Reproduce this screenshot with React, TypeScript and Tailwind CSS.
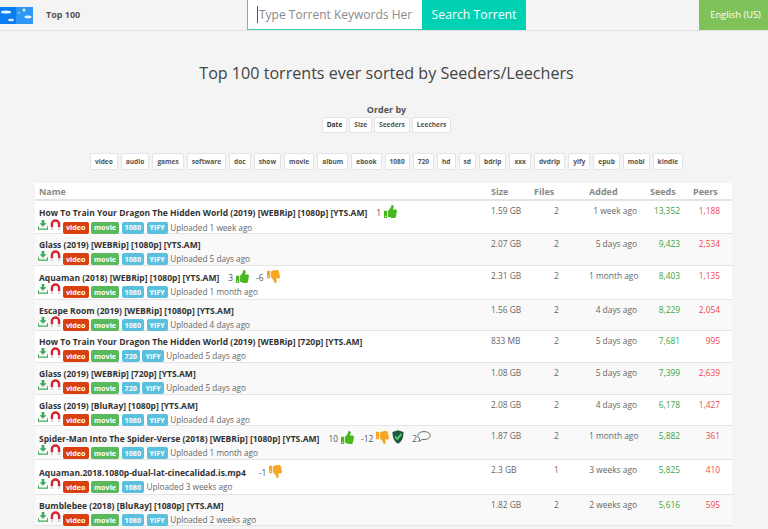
import { FaThumbsUp, FaThumbsDown } from 'react-icons/fa';

const orderOptions = ['Date', 'Size', 'Seeders', 'Leechers'];
const filters = ['video', 'audio', 'games', 'software', 'doc', 'show', 'movie', 'album', 'ebook', '1080', '720', 'hd', 'sd', 'bdrip', 'xxx', 'dvdrip', 'yify', 'epub', 'mobi', 'kindle'];

type Torrent = {
  name: string;
  tags: string[];
  uploaded: string;
  size: string;
  files: number;
  added: string;
  seeds: string;
  peers: string;
  up?: number;
  down?: number;
  safe?: boolean;
  comments?: number;
  rowClass: string;
  cellClass?: string;
};

const torrents: Torrent[] = [
  { name: 'How To Train Your Dragon The Hidden World (2019) [WEBRip] [1080p] [YTS.AM]', tags: ['1080', 'YIFY'], uploaded: '1 week ago', size: '1.59 GB', files: 2, added: '1 week ago', seeds: '13,352', peers: '1,188', up: 1, rowClass: 'h-[34px] bg-white', cellClass: 'pt-[3px]' },
  { name: 'Glass (2019) [WEBRip] [1080p] [YTS.AM]', tags: ['1080', 'YIFY'], uploaded: '5 days ago', size: '2.07 GB', files: 2, added: '5 days ago', seeds: '9,423', peers: '2,534', rowClass: 'h-[32px] bg-[#f9f9f9]' },
  { name: 'Aquaman (2018) [WEBRip] [1080p] [YTS.AM]', tags: ['1080', 'YIFY'], uploaded: '1 month ago', size: '2.31 GB', files: 2, added: '1 month ago', seeds: '8,403', peers: '1,135', up: 3, down: -6, rowClass: 'h-[34px] bg-white', cellClass: 'pt-[2px]' },
  { name: 'Escape Room (2019) [WEBRip] [1080p] [YTS.AM]', tags: ['1080', 'YIFY'], uploaded: '4 days ago', size: '1.56 GB', files: 2, added: '4 days ago', seeds: '8,229', peers: '2,054', rowClass: 'h-[31px] bg-[#f9f9f9]' },
  { name: 'How To Train Your Dragon The Hidden World (2019) [WEBRip] [720p] [YTS.AM]', tags: ['720', 'YIFY'], uploaded: '5 days ago', size: '833 MB', files: 2, added: '5 days ago', seeds: '7,681', peers: '995', rowClass: 'h-[32px] bg-white' },
  { name: 'Glass (2019) [WEBRip] [720p] [YTS.AM]', tags: ['720', 'YIFY'], uploaded: '5 days ago', size: '1.08 GB', files: 2, added: '5 days ago', seeds: '7,399', peers: '2,639', rowClass: 'h-[32px] bg-[#f9f9f9]' },
  { name: 'Glass (2019) [BluRay] [1080p] [YTS.AM]', tags: ['1080', 'YIFY'], uploaded: '4 days ago', size: '2.08 GB', files: 2, added: '4 days ago', seeds: '6,178', peers: '1,427', rowClass: 'h-[31px] bg-white' },
  { name: 'Spider-Man Into The Spider-Verse (2018) [WEBRip] [1080p] [YTS.AM]', tags: ['1080', 'YIFY'], uploaded: '1 month ago', size: '1.87 GB', files: 2, added: '1 month ago', seeds: '5,882', peers: '361', up: 10, down: -12, safe: true, comments: 2, rowClass: 'h-[34px] bg-[#f9f9f9]', cellClass: 'pt-[3px]' },
  { name: 'Aquaman.2018.1080p-dual-lat-cinecalidad.is.mp4', tags: ['1080'], uploaded: '3 weeks ago', size: '2.3 GB', files: 1, added: '3 weeks ago', seeds: '5,825', peers: '410', down: -1, rowClass: 'h-[35px] bg-white', cellClass: 'pt-[3px]' },
  { name: 'Bumblebee (2018) [BluRay] [1080p] [YTS.AM]', tags: ['1080', 'YIFY'], uploaded: '2 weeks ago', size: '1.82 GB', files: 2, added: '2 weeks ago', seeds: '5,616', peers: '595', rowClass: 'h-[31px] bg-[#f9f9f9]' },
];

function Logo() {
  return (
    <svg width="33" height="17" viewBox="0 0 33 17" className="block">
      <rect width="33" height="17" fill="#0a7df0" />
      <rect x="16" width="17" height="17" fill="#2f97f5" />
      <ellipse cx="6" cy="5" rx="5" ry="1.5" fill="#e6f3ff" />
      <ellipse cx="11" cy="13" rx="3" ry="1.2" fill="#e6f3ff" />
      <ellipse cx="28" cy="10" rx="3.5" ry="1.4" fill="#e6f3ff" />
      <circle cx="24" cy="3" r="1.5" fill="#e8f29a" />
      <circle cx="19" cy="6" r="0.8" fill="#e6f3ff" />
    </svg>
  );
}

function DownloadIcon() {
  return (
    <svg width="10" height="10" viewBox="0 0 11 11" className="block">
      <path d="M4 0h3v3.5h2.5L5.5 7.5 1.5 3.5H4z" fill="#3dad5b" />
      <path d="M0.5 7v3h10V7" fill="none" stroke="#3dad5b" strokeWidth="1.2" />
    </svg>
  );
}

function MagnetIcon() {
  return (
    <svg width="11" height="12" viewBox="0 0 11 13" className="block">
      <path d="M1.6 9V5.5a3.9 3.9 0 0 1 7.8 0V9" fill="none" stroke="#d3272f" strokeWidth="2.6" />
      <path d="M1.6 9v3M9.4 9v3" fill="none" stroke="#d5d5d5" strokeWidth="2.6" />
    </svg>
  );
}

function ShieldIcon() {
  return (
    <svg width="12" height="14" viewBox="0 0 12 14" className="block">
      <path d="M6 0.3 11.5 2c0 5-1 9-5.5 11.7C1.5 11 .5 7 .5 2z" fill="#1d5c3f" />
      <path d="M3 6.5 5.3 9 9.3 4.2" fill="none" stroke="#5fd07a" strokeWidth="1.8" />
    </svg>
  );
}

function CommentIcon() {
  return (
    <svg width="14" height="12" viewBox="0 0 14 12" className="block">
      <path d="M7 .6c3.4 0 6.2 1.800 6.200 4s-2.800 4-6.200 4c-.7 0-1.300-.1-1.900-.2C4 9.700 2.500 10.300 1.500 10.400c.7-.7 1.200-1.500 1.300-2.600C1.500 7 .8 5.900.8 4.600.8 2.400 3.600.6 7 .6z" fill="none" stroke="#555" strokeWidth="0.9" />
    </svg>
  );
}

function Tag({ label, className }: { label: string; className: string }) {
  return (
    <span className={`inline-flex h-[12px] items-center rounded-[2px] px-[3px] text-[7.2px] font-bold text-white ${className}`}>
      {label}
    </span>
  );
}

export default function App() {
  return (
    <div className="h-[529px] overflow-hidden bg-[#f4f4f4] font-['Open_Sans',sans-serif] text-[#555]">
      {/* Top bar */}
      <header className="flex h-[31px] items-stretch border-b border-[#e2e2e2]">
        <div className="flex w-[247px] items-center">
          <Logo />
          <a className="ml-[13px] text-[9px] font-bold text-[#555]">Top 100</a>
        </div>
        <div className="flex h-[30px] w-[175px] items-center overflow-hidden border-b border-l border-[#3fcfb2] bg-white pl-[9px] text-[12px] whitespace-nowrap text-[#8a8a8a]">
          <span className="mr-px h-[17px] w-px shrink-0 bg-[#555]" />
          <span className="shrink-0">Type Torrent Keywords Her</span>
        </div>
        <div className="flex h-[30px] w-[104px] items-center justify-center bg-[#00d1b2] text-[12.25px] text-white">
          Search Torrent
        </div>
        <div className="ml-auto flex h-[30px] w-[69px] items-center justify-center bg-[#7fc25a] pl-[4px] text-[9.3px] text-white">
          English (US)
        </div>
      </header>

      <div className="pl-[5px]">
        {/* Title */}
        <h1 className="mt-[30px] text-center text-[16.1px] leading-[24px] text-[#444]">
          Top 100 torrents ever sorted by Seeders/Leechers
        </h1>

        {/* Order by */}
        <div className="mt-[19px] flex flex-col items-center">
          <div className="text-[9px] leading-[12px] font-bold text-[#555]">Order by</div>
          <div className="mt-[1px] flex gap-[2px]">
            {orderOptions.map((option, i) => (
              <span
                key={option}
                className={`flex h-[16px] items-center rounded-[2px] border border-[#e4e4e4] bg-white px-[4px] text-[6.6px] font-bold ${i === 0 ? 'text-[#333]' : 'text-[#555]'}`}
              >
                {option}
              </span>
            ))}
          </div>
        </div>

        {/* Filters */}
        <div className="mt-[20px] flex justify-center gap-[3px]">
          {filters.map((filter) => (
            <span key={filter} className="flex h-[17px] items-center rounded-[2px] border border-[#e4e4e4] bg-white px-[4px] text-[6.6px] font-bold text-[#555]">
              {filter}
            </span>
          ))}
        </div>
      </div>

      {/* Table */}
      <table className="mt-[13px] ml-[35px] w-[697px] table-fixed border-collapse text-[8.4px]">
        <thead>
          <tr className="h-[16px] border-b-2 border-[#e4e4e4] bg-white text-left text-[9px] font-bold text-[#888]">
            <th className="w-[456px] pt-[2px] pl-[4px] font-bold">Name</th>
            <th className="w-[43px] pt-[2px] font-bold">Size</th>
            <th className="w-[55px] pt-[2px] font-bold">Files</th>
            <th className="w-[61px] pt-[2px] font-bold">Added</th>
            <th className="w-[43px] pt-[2px] font-bold">Seeds</th>
            <th className="pt-[2px] font-bold">Peers</th>
          </tr>
        </thead>
        <tbody>
          {torrents.map((t, i) => (
            <tr key={i} className={`border-b border-[#e4e4e4] ${t.rowClass}`}>
              <td className={`pl-[4px] align-top ${t.cellClass ?? 'pt-[1px]'}`}>
                <div className="flex h-[18px] items-center pt-[2px] whitespace-nowrap">
                  <span className="text-[8.5px] font-bold text-[#333]">{t.name}</span>
                  {t.up !== undefined && (
                    <span className="ml-[9px] flex items-center gap-[3px] text-[8.4px]">
                      {t.up}
                      <FaThumbsUp className="mb-[4px] text-[13px] text-[#46b81e]" />
                    </span>
                  )}
                  {t.down !== undefined && (
                    <span className={`flex items-center gap-[3px] text-[8.4px] ${t.up === undefined ? 'ml-[13px]' : 'ml-[7px]'}`}>
                      {t.down}
                      <FaThumbsDown className="mb-[4px] text-[13px] text-[#f5a623]" />
                    </span>
                  )}
                  {t.safe && <span className="mb-[4px] ml-[3px]"><ShieldIcon /></span>}
                  {t.comments !== undefined && (
                    <span className="ml-[8px] flex items-center text-[8.4px]">
                      {t.comments}
                      <span className="mb-[5px]"><CommentIcon /></span>
                    </span>
                  )}
                </div>
                <div className="-ml-[1px] flex h-[10px] items-start">
                  <span className="-mt-[2px] mr-[2px]"><DownloadIcon /></span>
                  <span className="-mt-[3px] mr-[2px]"><MagnetIcon /></span>
                  <span className="flex items-center gap-[2.5px]">
                    <Tag label="video" className="bg-[#d9400f]" />
                    <Tag label="movie" className="bg-[#5cb85c]" />
                    <Tag label={t.tags[0]} className="bg-[#5bc0de]" />
                    {t.tags[1] && <Tag label={t.tags[1]} className="bg-[#5bc0de]" />}
                    <span className="text-[8.2px] text-[#666]">Uploaded {t.uploaded}</span>
                  </span>
                </div>
              </td>
              <td className="pt-[4px] align-top text-[#666]">{t.size}</td>
              <td className="pt-[4px] pl-[20px] align-top text-[#666]">{t.files}</td>
              <td className="pt-[4px] pr-[13px] text-right align-top whitespace-nowrap text-[#666]">{t.added}</td>
              <td className="pt-[4px] pr-[13px] text-right align-top text-[#3aa53a]">{t.seeds}</td>
              <td className="pt-[4px] pr-[12px] text-right align-top text-[#f0474f]">{t.peers}</td>
            </tr>
          ))}
        </tbody>
      </table>
    </div>
  );
}
